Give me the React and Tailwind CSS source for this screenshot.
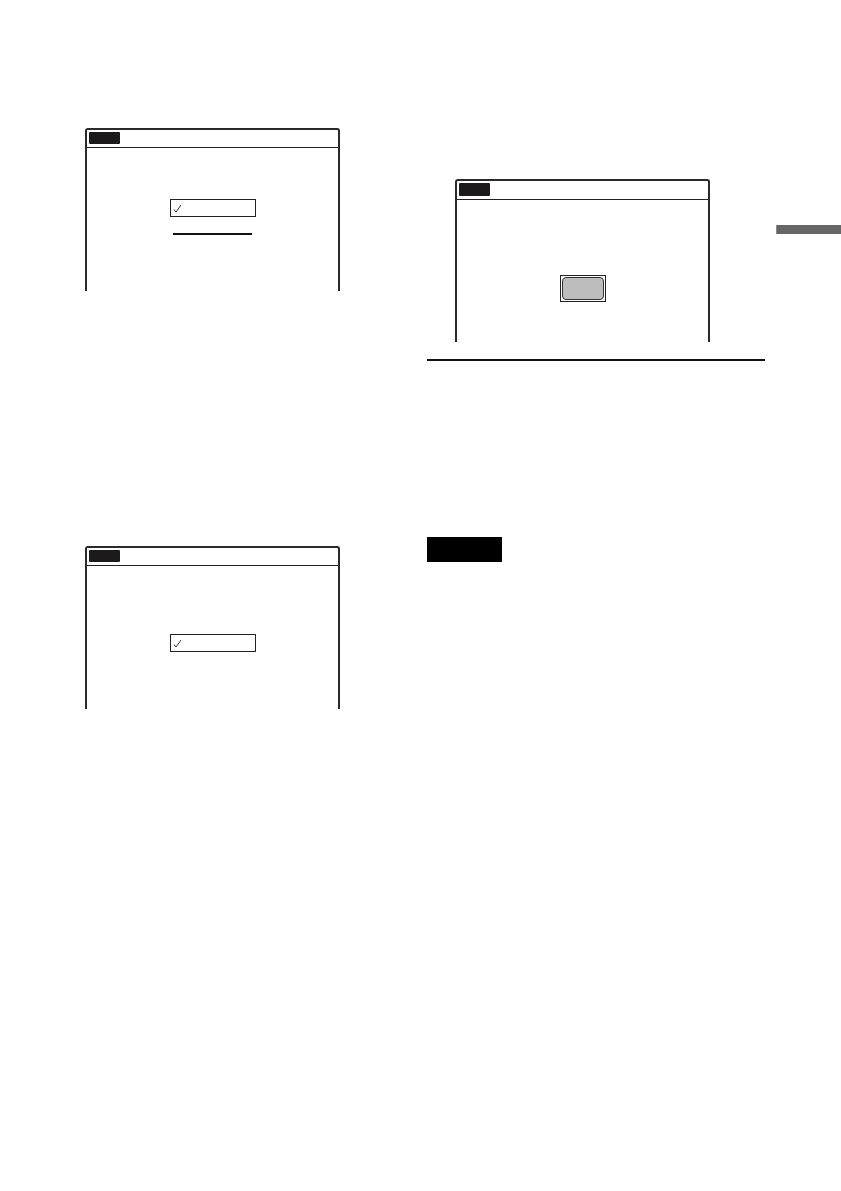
import React from "react";

function Panel({ children, headerH = "h-[18px]", tabH = "h-[12px]" }) {
  return (
    <div className="w-[255px] h-[163px] border-[2px] border-b-0 border-[#2a2a2a] rounded-t-[3px] flex flex-col bg-white">
      <div className={`${headerH} border-b border-[#222] flex items-start pt-[2px] pl-[2px] shrink-0`}>
        <div className={`w-[31px] ${tabH} bg-[#1c1a1a] rounded-[1px]`} />
      </div>
      <div className="flex-1 flex flex-col items-center">{children}</div>
    </div>
  );
}

function CheckBox() {
  return (
    <div className="w-[86px] h-[18px] border border-[#222] flex items-center pl-[2px]">
      <svg width="9" height="9" viewBox="0 0 9 9">
        <path d="M1 5.5 L3 8 L8 1" fill="none" stroke="#333" strokeWidth="1" />
      </svg>
    </div>
  );
}

export default function App() {
  return (
    <div className="w-[841px] h-[1191px] bg-white flex" style={{ fontFamily: '"Liberation Sans", Arial, sans-serif' }}>
      {/* left column */}
      <div className="ml-[85px] w-[256px] flex flex-col">
        <div className="mt-[128px]">
          <Panel>
            <div className="mt-[51px]">
              <CheckBox />
            </div>
            <div className="mt-[16px] w-[79px] h-[1.5px] bg-[#111]" />
          </Panel>
        </div>
        <div className="mt-[255px]">
          <Panel>
            <div className="mt-[68px]">
              <CheckBox />
            </div>
          </Panel>
        </div>
      </div>

      {/* right column */}
      <div className="ml-[86px] w-[338px] flex flex-col">
        <div className="ml-[28px] mt-[179px]">
          <Panel headerH="h-[19px]" tabH="h-[13px]">
            <div className="mt-[75px] w-[46px] h-[27px] border border-[#222] p-[1px]">
              <div className="w-full h-full bg-[#bdbdbd] border border-[#333] rounded-[4px]" />
            </div>
          </Panel>
        </div>
        <div className="mt-[17px] w-[338px] h-[2px] bg-[#111]" />
        <div className="mt-[176px] w-[75px] h-[25px] bg-black" />
      </div>

      {/* thumb index */}
      <div className="ml-[11px] mt-[225px] w-[65px] h-[9px] bg-[#666] border-l border-[#888]" />
    </div>
  );
}
